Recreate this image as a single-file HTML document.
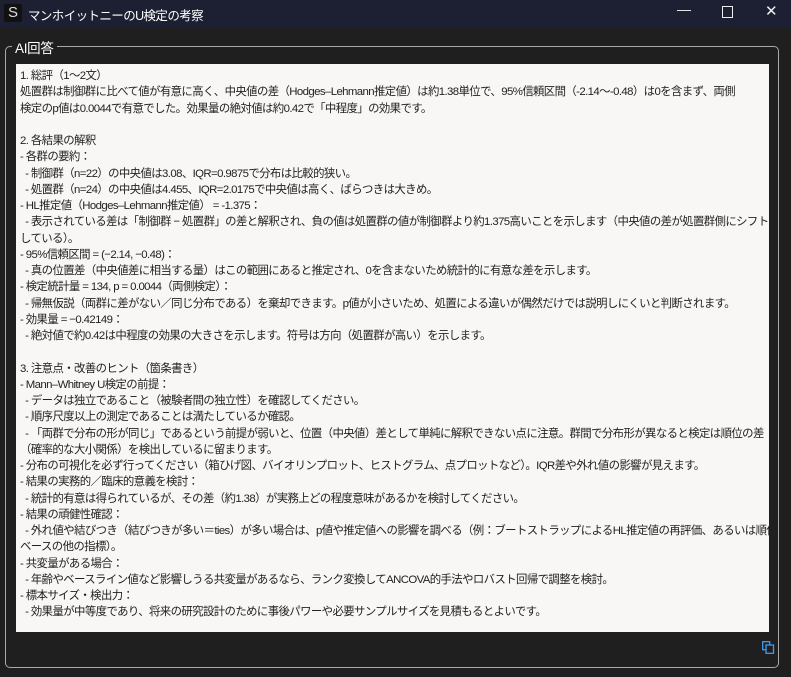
<!DOCTYPE html>
<html><head><meta charset="utf-8"><style>
html,body{margin:0;padding:0;width:791px;height:677px;overflow:hidden;background:#1f1f1f;font-family:"Liberation Sans","Noto Sans CJK JP",sans-serif;}
.tb{position:absolute;left:0;top:0;width:791px;height:27px;background:#1c2032;color:#fff;}
.ic{position:absolute;left:4px;top:4px;width:18px;height:18px;background:#111;border-radius:2px;color:#ddd;font-size:15px;line-height:18px;text-align:center;}
.tt{position:absolute;left:28px;top:5px;font-size:12.5px;letter-spacing:-0.6px;}
.ctl{position:absolute;top:3px;font-size:14px;color:#eee;}
.box{position:absolute;left:5px;top:46px;width:772px;height:620px;border:1px solid #a9a9a9;border-radius:5px;}
.lbl{position:absolute;left:12px;top:37px;background:#1f1f1f;color:#fff;font-size:13.5px;padding:0 3px;letter-spacing:-0.3px;}
.ta{position:absolute;left:16px;top:64px;width:753px;height:568px;background:#f8f7f5;overflow:hidden;}
.tx{position:absolute;left:4px;top:4px;white-space:pre;font-size:11.4px;line-height:16.25px;color:#222;letter-spacing:-0.6px;}
</style></head><body>
<div class="tb"><div class="ic">S</div><div class="tt">マンホイットニーのU検定の考察</div>
<div class="ctl" style="left:677px;top:1px">—</div>
<div style="position:absolute;left:722px;top:6px;width:9px;height:10px;border:1.3px solid #eee"></div>
<div class="ctl" style="left:765px;top:2px;font-size:15px">✕</div></div>
<div class="box"></div>
<div class="lbl">AI回答</div>
<div class="ta"><div class="tx">1. 総評（1～2文）
処置群は制御群に比べて値が有意に高く、中央値の差（Hodges–Lehmann推定値）は約1.38単位で、95%信頼区間（-2.14～-0.48）は0を含まず、両側
検定のp値は0.0044で有意でした。効果量の絶対値は約0.42で「中程度」の効果です。

2. 各結果の解釈
- 各群の要約：
  - 制御群（n=22）の中央値は3.08、IQR=0.9875で分布は比較的狭い。
  - 処置群（n=24）の中央値は4.455、IQR=2.0175で中央値は高く、ばらつきは大きめ。
- HL推定値（Hodges–Lehmann推定値） = -1.375：
  - 表示されている差は「制御群 − 処置群」の差と解釈され、負の値は処置群の値が制御群より約1.375高いことを示します（中央値の差が処置群側にシフト
している）。
- 95%信頼区間 = (−2.14, −0.48)：
  - 真の位置差（中央値差に相当する量）はこの範囲にあると推定され、0を含まないため統計的に有意な差を示します。
- 検定統計量 = 134, p = 0.0044（両側検定）：
  - 帰無仮説（両群に差がない／同じ分布である）を棄却できます。p値が小さいため、処置による違いが偶然だけでは説明しにくいと判断されます。
- 効果量 = −0.42149：
  - 絶対値で約0.42は中程度の効果の大きさを示します。符号は方向（処置群が高い）を示します。

3. 注意点・改善のヒント（箇条書き）
- Mann–Whitney U検定の前提：
  - データは独立であること（被験者間の独立性）を確認してください。
  - 順序尺度以上の測定であることは満たしているか確認。
  - 「両群で分布の形が同じ」であるという前提が弱いと、位置（中央値）差として単純に解釈できない点に注意。群間で分布形が異なると検定は順位の差
（確率的な大小関係）を検出しているに留まります。
- 分布の可視化を必ず行ってください（箱ひげ図、バイオリンプロット、ヒストグラム、点プロットなど）。IQR差や外れ値の影響が見えます。
- 結果の実務的／臨床的意義を検討：
  - 統計的有意は得られているが、その差（約1.38）が実務上どの程度意味があるかを検討してください。
- 結果の頑健性確認：
  - 外れ値や結びつき（結びつきが多い＝ties）が多い場合は、p値や推定値への影響を調べる（例：ブートストラップによるHL推定値の再評価、あるいは順位
ベースの他の指標）。
- 共変量がある場合：
  - 年齢やベースライン値など影響しうる共変量があるなら、ランク変換してANCOVA的手法やロバスト回帰で調整を検討。
- 標本サイズ・検出力：
  - 効果量が中等度であり、将来の研究設計のために事後パワーや必要サンプルサイズを見積もるとよいです。</div></div>
<svg style="position:absolute;left:762px;top:641px" width="13" height="13" viewBox="0 0 13 13" fill="none" stroke="#3b9cf0" stroke-width="1.3"><rect x="0.7" y="0.7" width="7" height="8"/><rect x="4" y="4" width="7.5" height="8.3" fill="#1f1f1f"/></svg>
</body></html>
